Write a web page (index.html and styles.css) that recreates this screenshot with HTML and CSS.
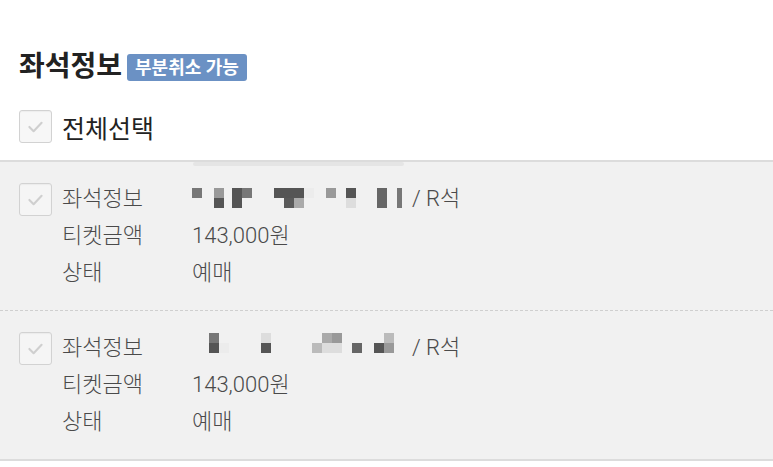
FILE: index.html
```html
<!DOCTYPE html>
<html lang="ko">
<head>
    <meta charset="UTF-8">
    <meta name="viewport" content="width=device-width, initial-scale=1.0">
    <title>좌석정보</title>
    <link rel="stylesheet" href="styles.css">
</head>
<body>
    <div class="header">
        <h2 class="title">좌석정보</h2>
        <span class="badge">부분취소 가능</span>
    </div>
    <label class="select-all">
        <span class="check"><svg viewBox="0 0 33 33"><path d="M10 17 L14.5 21.5 L23 12.5"/></svg></span>
        <span>전체선택</span>
    </label>

    <div class="seat-list">
        <div class="top-shade"></div>
        <div class="seat-item">
            <span class="check"><svg viewBox="0 0 33 33"><path d="M10 17 L14.5 21.5 L23 12.5"/></svg></span>
            <div class="seat-rows">
                <div class="row"><span class="label">좌석정보</span><span class="value"><span class="mosaic" id="mosaic1"></span>/ R석</span></div>
                <div class="row"><span class="label">티켓금액</span><span class="value">143,000원</span></div>
                <div class="row"><span class="label">상태</span><span class="value">예매</span></div>
            </div>
        </div>
        <div class="seat-item">
            <span class="check"><svg viewBox="0 0 33 33"><path d="M10 17 L14.5 21.5 L23 12.5"/></svg></span>
            <div class="seat-rows">
                <div class="row"><span class="label">좌석정보</span><span class="value"><span class="mosaic" id="mosaic2"></span>/ R석</span></div>
                <div class="row"><span class="label">티켓금액</span><span class="value">143,000원</span></div>
                <div class="row"><span class="label">상태</span><span class="value">예매</span></div>
            </div>
        </div>
    </div>

    <script>
        // blurred seat number: [left, top, width, height, colour]
        const mosaics = {
            mosaic1: [
                [0, 8, 10, 10, '#777'],
                [22, 8, 10, 10, '#999'], [22, 18, 10, 10, '#555'],
                [40, 8, 10, 20, '#555'], [50, 8, 10, 10, '#777'],
                [82, 8, 20, 10, '#555'], [92, 18, 10, 10, '#5a5a5a'],
                [102, 8, 10, 10, '#555'], [102, 18, 10, 10, '#aaa'],
                [112, 8, 10, 10, '#ececec'],
                [134, 8, 10, 10, '#999'],
                [154, 8, 10, 10, '#555'], [154, 18, 10, 10, '#ddd'],
                [185, 8, 10, 20, '#666'],
                [205, 8, 5, 20, '#777']
            ],
            mosaic2: [
                [17, 4, 10, 10, '#777'], [17, 14, 10, 10, '#555'], [27, 14, 10, 10, '#ececec'],
                [69, 4, 10, 10, '#ddd'], [69, 14, 10, 10, '#555'],
                [120, 14, 10, 10, '#bbb'], [130, 4, 10, 10, '#aaa'], [130, 14, 10, 10, '#ddd'],
                [140, 4, 10, 10, '#999'], [140, 14, 10, 10, '#ddd'],
                [160, 14, 10, 10, '#666'],
                [182, 14, 10, 10, '#555'], [192, 4, 10, 10, '#bbb'], [192, 14, 10, 10, '#999']
            ]
        };
        Object.keys(mosaics).forEach(id => {
            const box = document.getElementById(id);
            box.innerHTML = mosaics[id].map(c =>
                `<i style="left:${c[0]}px;top:${c[1]}px;width:${c[2]}px;height:${c[3]}px;background:${c[4]}"></i>`
            ).join('');
        });
    </script>
</body>
</html>
```

FILE: styles.css
```css
body {
    margin: 0;
    font-family: Roboto, "Noto Sans CJK KR", sans-serif;
    background: #fff;
    color: #222;
}
.header {
    display: flex;
    align-items: center;
    gap: 5px;
    padding: 52px 19px 0;
    height: 30px;
}
.title {
    margin: 0;
    font-size: 28px;
    font-weight: 700;
    line-height: 30px;
    color: #222;
}
.badge {
    background: #6b91c4;
    color: #fff;
    font-size: 18px;
    font-weight: 700;
    line-height: 27px;
    padding: 0 8px;
    border-radius: 3px;
}
.select-all {
    display: flex;
    align-items: center;
    gap: 10px;
    padding: 28px 19px 0;
    height: 33px;
    font-size: 25px;
    color: #222;
}
.check {
    display: block;
    flex: none;
    width: 31px;
    height: 31px;
    border: 1px solid #d2d2d2;
    border-radius: 3px;
    background: #f7f7f7;
    box-shadow: inset 0 1px 1px rgba(0,0,0,0.04);
}
.check svg {
    display: block;
    width: 31px;
    height: 31px;
}
.check path {
    fill: none;
    stroke: #cfcfcf;
    stroke-width: 2.2;
    stroke-linecap: round;
    stroke-linejoin: round;
}
.seat-list {
    position: relative;
    margin-top: 17px;
    background: #f1f1f1;
    border-top: 2px solid #dcdcdc;
    border-bottom: 2px solid #dcdcdc;
}
.top-shade {
    position: absolute;
    top: 0;
    left: 193px;
    width: 211px;
    height: 4px;
    background: #e5e5e5;
    border-radius: 2px;
}
.seat-item {
    display: flex;
    align-items: flex-start;
    padding: 18px 0 19px 19px;
}
.seat-item + .seat-item {
    border-top: 1px dashed #cfcfcf;
}
.seat-item .check {
    margin-top: 3px;
    background: #f5f5f5;
}
.seat-rows {
    margin-left: 10px;
}
.row {
    display: flex;
    height: 37px;
    line-height: 37px;
    font-size: 22px;
    font-weight: 300;
    color: #4a4a4a;
}
.label {
    width: 130px;
}
.value {
    display: flex;
    align-items: center;
}
.mosaic {
    position: relative;
    display: block;
    width: 220px;
    height: 37px;
}
.mosaic i {
    position: absolute;
}
```
